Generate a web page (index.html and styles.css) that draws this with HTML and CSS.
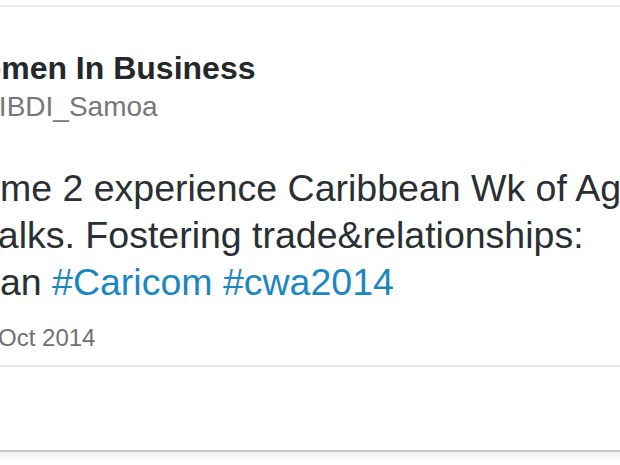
FILE: index.html
```html
<!DOCTYPE html>
<html lang="en">
<head>
<meta charset="utf-8">
<title>Tweet</title>
<link rel="stylesheet" href="styles.css">
</head>
<body>
<div class="viewport">
  <article class="tweet">
    <header class="tweet-header">
      <div class="name">Women In Business</div>
      <div class="handle">@WIBDI_Samoa</div>
    </header>
    <p class="text">Come 2 experience Caribbean Wk of Agriculture<br>&amp; talks. Fostering trade&amp;relationships:<br>Fijian <a class="tag" href="#">#Caricom</a> <a class="tag" href="#">#cwa2014</a></p>
    <div class="date">· 14 Oct 2014</div>
    <footer class="tweet-footer"></footer>
  </article>
</div>
</body>
</html>
```

FILE: styles.css
```css
html, body {
  margin: 0;
  padding: 0;
  background: #ffffff;
}
.viewport {
  width: 620px;
  height: 465px;
  overflow: hidden;
  padding-top: 5px;
  box-sizing: border-box;
}
.tweet {
  margin-left: -48px;
  width: 760px;
  border-top: 2px solid #ececec;
  border-bottom: 2px solid #c6c6c6;
  box-shadow: 0 4px 8px rgba(0, 0, 0, 0.08);
  font-family: "Liberation Sans", Arial, sans-serif;
  color: #292f33;
  white-space: nowrap;
}
.tweet-header {
  padding-top: 41px;
}
.name {
  font-size: 32px;
  line-height: 40px;
  font-weight: bold;
  color: #24282b;
}
.handle {
  margin-top: 1px;
  margin-left: -8px;
  font-size: 28px;
  line-height: 36px;
  color: #777777;
}
.text {
  margin: 40px 0 0 0;
  font-size: 37.5px;
  line-height: 47px;
  color: #292f33;
}
.tag {
  color: #1a87c3;
  text-decoration: none;
}
.date {
  margin-top: 17px;
  margin-left: -2px;
  padding-bottom: 12px;
  font-size: 24px;
  line-height: 30px;
  color: #707070;
  border-bottom: 2px solid #e8e8e8;
}
.tweet-footer {
  height: 83px;
}
```
